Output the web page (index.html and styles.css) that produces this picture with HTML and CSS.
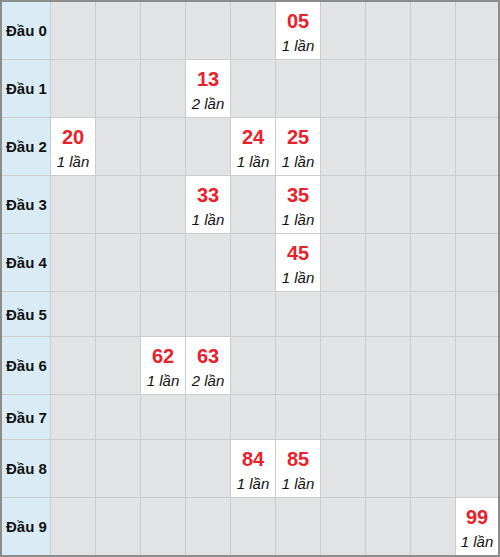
FILE: index.html
```html
<!DOCTYPE html>
<html lang="vi">

<head>
  <meta charset="UTF-8" />
  <meta name="viewport" content="width=device-width, initial-scale=1.0" />
  <title>Thống kê đầu</title>
  <link rel="stylesheet" href="styles.css">
</head>

<body>
  <div class="board">
    <!-- Đầu 0 -->
    <div class="head">Đầu 0</div>
    <div class="cell"></div><div class="cell"></div><div class="cell"></div><div class="cell"></div><div class="cell"></div>
    <div class="cell hit"><span class="num">05</span><span class="times">1 lần</span></div>
    <div class="cell"></div><div class="cell"></div><div class="cell"></div><div class="cell"></div>

    <!-- Đầu 1 -->
    <div class="head">Đầu 1</div>
    <div class="cell"></div><div class="cell"></div><div class="cell"></div>
    <div class="cell hit"><span class="num">13</span><span class="times">2 lần</span></div>
    <div class="cell"></div><div class="cell"></div><div class="cell"></div><div class="cell"></div><div class="cell"></div><div class="cell"></div>

    <!-- Đầu 2 -->
    <div class="head">Đầu 2</div>
    <div class="cell hit"><span class="num">20</span><span class="times">1 lần</span></div>
    <div class="cell"></div><div class="cell"></div><div class="cell"></div>
    <div class="cell hit"><span class="num">24</span><span class="times">1 lần</span></div>
    <div class="cell hit"><span class="num">25</span><span class="times">1 lần</span></div>
    <div class="cell"></div><div class="cell"></div><div class="cell"></div><div class="cell"></div>

    <!-- Đầu 3 -->
    <div class="head">Đầu 3</div>
    <div class="cell"></div><div class="cell"></div><div class="cell"></div>
    <div class="cell hit"><span class="num">33</span><span class="times">1 lần</span></div>
    <div class="cell"></div>
    <div class="cell hit"><span class="num">35</span><span class="times">1 lần</span></div>
    <div class="cell"></div><div class="cell"></div><div class="cell"></div><div class="cell"></div>

    <!-- Đầu 4 -->
    <div class="head">Đầu 4</div>
    <div class="cell"></div><div class="cell"></div><div class="cell"></div><div class="cell"></div><div class="cell"></div>
    <div class="cell hit"><span class="num">45</span><span class="times">1 lần</span></div>
    <div class="cell"></div><div class="cell"></div><div class="cell"></div><div class="cell"></div>

    <!-- Đầu 5 -->
    <div class="head">Đầu 5</div>
    <div class="cell"></div><div class="cell"></div><div class="cell"></div><div class="cell"></div><div class="cell"></div>
    <div class="cell"></div><div class="cell"></div><div class="cell"></div><div class="cell"></div><div class="cell"></div>

    <!-- Đầu 6 -->
    <div class="head">Đầu 6</div>
    <div class="cell"></div><div class="cell"></div>
    <div class="cell hit"><span class="num">62</span><span class="times">1 lần</span></div>
    <div class="cell hit"><span class="num">63</span><span class="times">2 lần</span></div>
    <div class="cell"></div><div class="cell"></div><div class="cell"></div><div class="cell"></div><div class="cell"></div><div class="cell"></div>

    <!-- Đầu 7 -->
    <div class="head">Đầu 7</div>
    <div class="cell"></div><div class="cell"></div><div class="cell"></div><div class="cell"></div><div class="cell"></div>
    <div class="cell"></div><div class="cell"></div><div class="cell"></div><div class="cell"></div><div class="cell"></div>

    <!-- Đầu 8 -->
    <div class="head">Đầu 8</div>
    <div class="cell"></div><div class="cell"></div><div class="cell"></div><div class="cell"></div>
    <div class="cell hit"><span class="num">84</span><span class="times">1 lần</span></div>
    <div class="cell hit"><span class="num">85</span><span class="times">1 lần</span></div>
    <div class="cell"></div><div class="cell"></div><div class="cell"></div><div class="cell"></div>

    <!-- Đầu 9 -->
    <div class="head">Đầu 9</div>
    <div class="cell"></div><div class="cell"></div><div class="cell"></div><div class="cell"></div><div class="cell"></div>
    <div class="cell"></div><div class="cell"></div><div class="cell"></div><div class="cell"></div>
    <div class="cell hit"><span class="num">99</span><span class="times">1 lần</span></div>
  </div>
</body>

</html>
```

FILE: styles.css
```css
body {
  margin: 0;
  font-family: "Liberation Sans", Arial, sans-serif;
  color: #111;
  background-color: #ffffff;
}

.board {
  width: 500px;
  height: 557px;
  box-sizing: border-box;
  border: 2px solid #8c8c8c;
  background-color: #cccccc;
  display: grid;
  grid-template-columns: 48px repeat(9, 44px) 42px;
  grid-template-rows: repeat(5, 57px) 44px 57px 44px 57px 57px;
  gap: 1px;
}

.head {
  background-color: #d9ecf6;
  display: flex;
  align-items: center;
  padding-left: 4px;
  font-size: 15px;
  font-weight: bold;
}

.cell {
  background-color: #e2e3e5;
}

.hit {
  background-color: #ffffff;
  display: flex;
  flex-direction: column;
  align-items: center;
  padding-top: 6px;
}

.num {
  color: #e8212b;
  font-size: 20px;
  font-weight: bold;
  line-height: 26px;
}

.times {
  font-size: 15px;
  font-style: italic;
  line-height: 24px;
}
```
